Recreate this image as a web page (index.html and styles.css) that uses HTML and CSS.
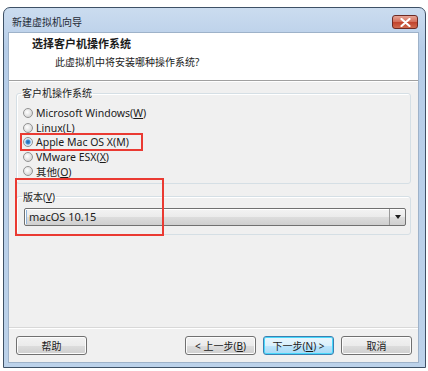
FILE: index.html
```html
<!DOCTYPE html>
<html lang="zh-CN">
<head>
    <meta charset="utf-8"/>
    <title>新建虚拟机向导</title>
    <link rel="stylesheet" href="styles.css">
</head>
<body>

<div class="window">
    <div class="titlebar">
        <span class="titlebar__text">新建虚拟机向导</span>
        <button class="titlebar__close" aria-label="关闭">
            <svg width="11" height="9" viewBox="0 0 11 9">
                <path d="M1.5 1 L9.5 8 M9.5 1 L1.5 8" stroke="#ffffff" stroke-width="2.2" stroke-linecap="round"/>
            </svg>
        </button>
    </div>

    <div class="client">
        <div class="header">
            <div class="header__title">选择客户机操作系统</div>
            <div class="header__sub">此虚拟机中将安装哪种操作系统?</div>
        </div>

        <div class="content">
            <fieldset class="group">
                <legend class="group__label">客户机操作系统</legend>
                <div class="radio_list">
                    <label class="radio"><span class="radio__dot"></span><span>Microsoft Windows(<u>W</u>)</span></label>
                    <label class="radio"><span class="radio__dot"></span><span>Linux(L)</span></label>
                    <label class="radio radio--checked mark mark--os"><span class="radio__dot"></span><span>Apple Mac OS X(M)</span></label>
                    <label class="radio"><span class="radio__dot"></span><span>VMware ESX(<u>X</u>)</span></label>
                    <label class="radio"><span class="radio__dot"></span><span>其他(<u>O</u>)</span></label>
                </div>
            </fieldset>

            <div class="version mark mark--version">
                <fieldset class="group group--version">
                    <legend class="group__label">版本(<u>V</u>)</legend>
                    <div class="combo">
                        <span class="combo__value">macOS 10.15</span>
                        <span class="combo__arrow"></span>
                    </div>
                </fieldset>
            </div>
        </div>

        <div class="footer">
            <button class="btn">帮助</button>
            <div class="footer__spacer"></div>
            <button class="btn">&lt; 上一步(<u>B</u>)</button>
            <button class="btn btn--default">下一步(<u>N</u>) &gt;</button>
            <button class="btn">取消</button>
        </div>
    </div>
</div>

</body>
</html>
```

FILE: styles.css
```css
html, body {
    margin: 0;
    background: #ffffff;
}

body {
    font-family: "Noto Sans", "Noto Sans CJK SC", sans-serif;
    font-size: 10px;
    color: #1b1b1b;
}

u {
    text-underline-offset: 1px;
}

.window {
    box-sizing: border-box;
    width: 423px;
    height: 361px;
    margin: 7px 0 0 3px;
    padding: 0 6px 4px 4px;
    border: 1px solid #3e5166;
    border-radius: 7px 7px 0 0;
    background: linear-gradient(#cbdcef, #b6cde8 40px, #bcd2ea);
    display: flex;
    flex-direction: column;
}

.titlebar {
    height: 24px;
    display: flex;
    align-items: flex-start;
    justify-content: space-between;
}

.titlebar__text {
    margin: 7px 0 0 4px;
    line-height: 14px;
    color: #1e2a36;
}

.titlebar__close {
    width: 26px;
    height: 14px;
    margin: 7px 1px 0 0;
    padding: 0;
    border: 1px solid #6d2a24;
    border-radius: 3px;
    background: linear-gradient(#e6a495, #d36c58 50%, #c1422c 51%, #cf6a4f);
    display: flex;
    align-items: center;
    justify-content: center;
}

/* ---- client area ---- */

.client {
    flex-grow: 1;
    display: flex;
    flex-direction: column;
    background: #f0f0f0;
    border: 1px solid #9eb2c9;
}

.header {
    height: 44px;
    padding: 3px 0 0 23px;
    background: #ffffff;
    border-bottom: 1px solid #a0a0a0;
    box-shadow: 0 1px 0 #ffffff;
}

.header__title {
    font-size: 11px;
    font-weight: bold;
    line-height: 16px;
}

.header__sub {
    margin: 2px 0 0 23px;
    line-height: 16px;
}

.content {
    flex-grow: 1;
    padding: 5px 7px 0 7px;
}

.group {
    margin: 0;
    padding: 0 0 4px 6px;
    border: 1px solid #d5dfe5;
    border-radius: 3px;
    box-shadow: inset 1px 1px 0 #ffffff;
}

.group__label {
    margin-left: -2px;
    padding: 0 1px;
    line-height: 14px;
}

.radio_list {
    padding-top: 6px;
}

.radio {
    height: 14.5px;
    display: flex;
    align-items: center;
    gap: 3px;
    width: fit-content;
    font-size: 10.5px;
}

.radio__dot {
    box-sizing: border-box;
    width: 10px;
    height: 10px;
    border: 1px solid #929292;
    border-radius: 50%;
    background: radial-gradient(circle at 40% 40%, #ffffff, #d9d9d9 70%);
}

.radio--checked .radio__dot {
    background: radial-gradient(circle, #1d5fa8 0, #3d8fd6 2px, #cfe3f5 3px, #eef4fa 5px);
}

/* red annotation boxes drawn over the dialog */
.mark {
    position: relative;
}

.mark::after {
    content: "";
    position: absolute;
    border: 2px solid #ea3a32;
}

.mark--os::after {
    top: -2px;
    bottom: -1px;
    left: -3px;
    width: 119px;
}

.version {
    margin-top: 6px;
}

.mark--version::after {
    top: -12px;
    left: -1px;
    width: 145px;
    bottom: -1px;
}

.group--version {
    padding: 0 4px 8px 7px;
}

.combo {
    box-sizing: border-box;
    height: 18px;
    margin-top: 4px;
    border: 1px solid #707070;
    border-radius: 2px;
    background: linear-gradient(#f3f3f3, #ebebeb 50%, #dddddd 50%, #cfcfcf);
    box-shadow: inset 1px 1px 0 #ffffff;
    display: flex;
    align-items: center;
}

.combo__value {
    flex-grow: 1;
    padding-left: 2px;
    font-size: 11px;
    line-height: 14px;
    margin-left: 1px;
    border-left: 1px solid #8fb3d9;
}

.combo__arrow {
    width: 15px;
    height: 100%;
    border-left: 1px solid #9a9a9a;
    display: flex;
    align-items: center;
    justify-content: center;
}

.combo__arrow::before {
    content: "";
    border-left: 3.5px solid transparent;
    border-right: 3.5px solid transparent;
    border-top: 4px solid #1c1c1c;
}

/* ---- buttons ---- */

.footer {
    display: flex;
    gap: 7px;
    padding: 8px 6px 7px 7px;
    border-top: 1px solid #d8d8d8;
    box-shadow: inset 0 1px 0 #ffffff;
}

.footer__spacer {
    flex-grow: 1;
}

.btn {
    width: 71px;
    height: 19px;
    padding: 0;
    font: inherit;
    color: #1b1b1b;
    border: 1px solid #707070;
    border-radius: 3px;
    background: linear-gradient(#f2f2f2, #ebebeb 50%, #dddddd 50%, #cfcfcf);
    box-shadow: inset 0 0 0 1px #fcfcfc;
}

.btn--default {
    border-color: #3c7fb1;
    background: linear-gradient(#eaf6fd, #d9f0fc 50%, #bee6fd 50%, #a7d9f5);
    box-shadow: inset 0 0 0 1px #48d8fb;
}
```
